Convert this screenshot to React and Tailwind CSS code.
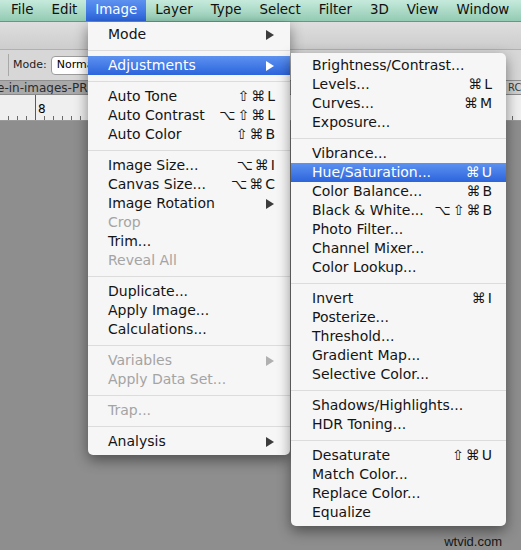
import React from 'react';

const FONT = { fontFamily: '"DejaVu Sans", sans-serif' };

const mainItems = [
  { label: 'Mode', arrow: true },
  'sep',
  { label: 'Adjustments', arrow: true, active: true },
  'sep',
  { label: 'Auto Tone', sc: '⇧⌘L' },
  { label: 'Auto Contrast', sc: '⌥⇧⌘L' },
  { label: 'Auto Color', sc: '⇧⌘B' },
  'sep',
  { label: 'Image Size...', sc: '⌥⌘I' },
  { label: 'Canvas Size...', sc: '⌥⌘C' },
  { label: 'Image Rotation', arrow: true },
  { label: 'Crop', disabled: true },
  { label: 'Trim...' },
  { label: 'Reveal All', disabled: true },
  'sep',
  { label: 'Duplicate...' },
  { label: 'Apply Image...' },
  { label: 'Calculations...' },
  'sep',
  { label: 'Variables', arrow: true, disabled: true },
  { label: 'Apply Data Set...', disabled: true },
  'sep',
  { label: 'Trap...', disabled: true },
  'sep',
  { label: 'Analysis', arrow: true },
];

const subItems = [
  { label: 'Brightness/Contrast...' },
  { label: 'Levels...', sc: '⌘L' },
  { label: 'Curves...', sc: '⌘M' },
  { label: 'Exposure...' },
  'sep',
  { label: 'Vibrance...' },
  { label: 'Hue/Saturation...', sc: '⌘U', active: true },
  { label: 'Color Balance...', sc: '⌘B' },
  { label: 'Black & White...', sc: '⌥⇧⌘B' },
  { label: 'Photo Filter...' },
  { label: 'Channel Mixer...' },
  { label: 'Color Lookup...' },
  'sep',
  { label: 'Invert', sc: '⌘I' },
  { label: 'Posterize...' },
  { label: 'Threshold...' },
  { label: 'Gradient Map...' },
  { label: 'Selective Color...' },
  'sep',
  { label: 'Shadows/Highlights...' },
  { label: 'HDR Toning...' },
  'sep',
  { label: 'Desaturate', sc: '⇧⌘U' },
  { label: 'Match Color...' },
  { label: 'Replace Color...' },
  { label: 'Equalize' },
];

const menuBar = ['File', 'Edit', 'Image', 'Layer', 'Type', 'Select', 'Filter', '3D', 'View', 'Window'];

// each key glyph gets its own span so they space out like the Mac menu
const Shortcut = ({ keys }) => (
  <span className="flex items-center gap-[2px]">
    {[...keys].map((c, i) => (
      <span key={i}>{c}</span>
    ))}
  </span>
);

const Arrow = ({ color }) => (
  <svg width="8" height="10" viewBox="0 0 8 10" className="mr-[1px]">
    <path d="M0 0 L8 5 L0 10 Z" fill={color} />
  </svg>
);

const MenuList = ({ items, pl, pr }) => (
  <>
    {items.map((it, i) => {
      if (it === 'sep') {
        return (
          <div key={i} className="h-[12px] flex items-center">
            <div className="h-px w-full bg-[#dcdcdc]" />
          </div>
        );
      }
      const color = it.active ? 'text-white' : it.disabled ? 'text-[#a4a4a4]' : 'text-[#141414]';
      return (
        <div
          key={i}
          className={`h-[19px] flex items-center justify-between ${color} ${
            it.active ? 'bg-gradient-to-b from-[#5d92f0] to-[#2c64dc]' : ''
          }`}
          style={{ paddingLeft: pl, paddingRight: pr }}
        >
          <span className="whitespace-nowrap">{it.label}</span>
          {it.sc && <Shortcut keys={it.sc} />}
          {it.arrow && <Arrow color={it.active ? '#ffffff' : it.disabled ? '#b0b0b0' : '#3c3c3c'} />}
        </div>
      );
    })}
  </>
);

const Ruler = () => (
  <div className="h-[26px] bg-[#efefef] border-b border-[#9a9a9a] relative overflow-hidden">
    <svg width="521" height="26" className="block">
      {Array.from({ length: 58 }).map((_, i) => {
        const x = 8 + i * 9 + 0.5;
        return <line key={i} x1={x} x2={x} y1="21" y2="26" stroke="#6a6a6a" strokeWidth="1" />;
      })}
      <line x1="35.5" x2="35.5" y1="0" y2="26" stroke="#5a5a5a" strokeWidth="1" />
    </svg>
    <span className="absolute left-[38px] top-[8px] text-[12px] leading-none text-black">8</span>
  </div>
);

export default function App() {
  return (
    <div className="w-[521px] h-[550px] relative overflow-hidden bg-[#8e8e8e] text-[14px]" style={FONT}>
      {/* menu bar */}
      <div className="h-[22px] flex items-stretch pl-[2px] text-[13.4px] bg-gradient-to-b from-[#c6eadc] to-[#92cbb4] border-b border-[#5f9b83]">
        {menuBar.map(m => (
          <div
            key={m}
            className={`px-[9px] flex items-center ${
              m === 'Image' ? 'bg-gradient-to-b from-[#5d92f0] to-[#2c64dc] text-white' : 'text-[#101010]'
            }`}
          >
            {m}
          </div>
        ))}
      </div>

      {/* application frame */}
      <div className="h-[28px] bg-gradient-to-b from-[#dedede] to-[#cdcdcd] border-b border-[#b0b0b0]" />
      <div className="h-[31px] bg-[#d7d7d7] flex items-center border-b border-[#8f8f8f]">
        <div className="w-px h-[22px] bg-[#a8a8a8] ml-[8px]" />
        <span className="ml-[4px] text-[11px] text-[#1c1c1c]">Mode:</span>
        <div className="ml-[4px] h-[19px] w-[60px] bg-white border border-[#9c9c9c] rounded-l-[4px] flex items-center pl-[5px] text-[11px] text-black">
          Normal
        </div>
      </div>
      <div className="h-[14px] bg-[#a9a9a9] flex items-center border-b border-[#8a8a8a] overflow-hidden">
        <span className="ml-[-3px] text-[12px] leading-none text-[#2b2b2b] whitespace-nowrap">e-in-images-PR</span>
        <div className="ml-auto h-full w-[15px] bg-[#cfcfcf] text-[10px] leading-[14px] text-[#3a3a3a] pl-[2px] overflow-hidden whitespace-nowrap">RC</div>
      </div>
      <Ruler />

      {/* Image menu */}
      <div className="absolute left-[88px] top-[22px] w-[202px] pt-[3px] pb-[4px] bg-[#f6f6f6] rounded-b-[5px] shadow-[0_5px_14px_rgba(0,0,0,0.45)]">
        <MenuList items={mainItems} pl={20} pr={15} />
      </div>

      {/* Adjustments submenu */}
      <div className="absolute left-[291px] top-[53px] w-[215px] pt-[3px] pb-[4px] bg-[#f6f6f6] rounded-r-[5px] rounded-bl-[5px] shadow-[0_5px_14px_rgba(0,0,0,0.45)]">
        <MenuList items={subItems} pl={21} pr={14} />
      </div>

      <span className="absolute right-[19px] top-[532px] text-[13px] text-[#161616]" style={{ fontFamily: '"Liberation Sans", sans-serif' }}>
        wtvid.com
      </span>
    </div>
  );
}
